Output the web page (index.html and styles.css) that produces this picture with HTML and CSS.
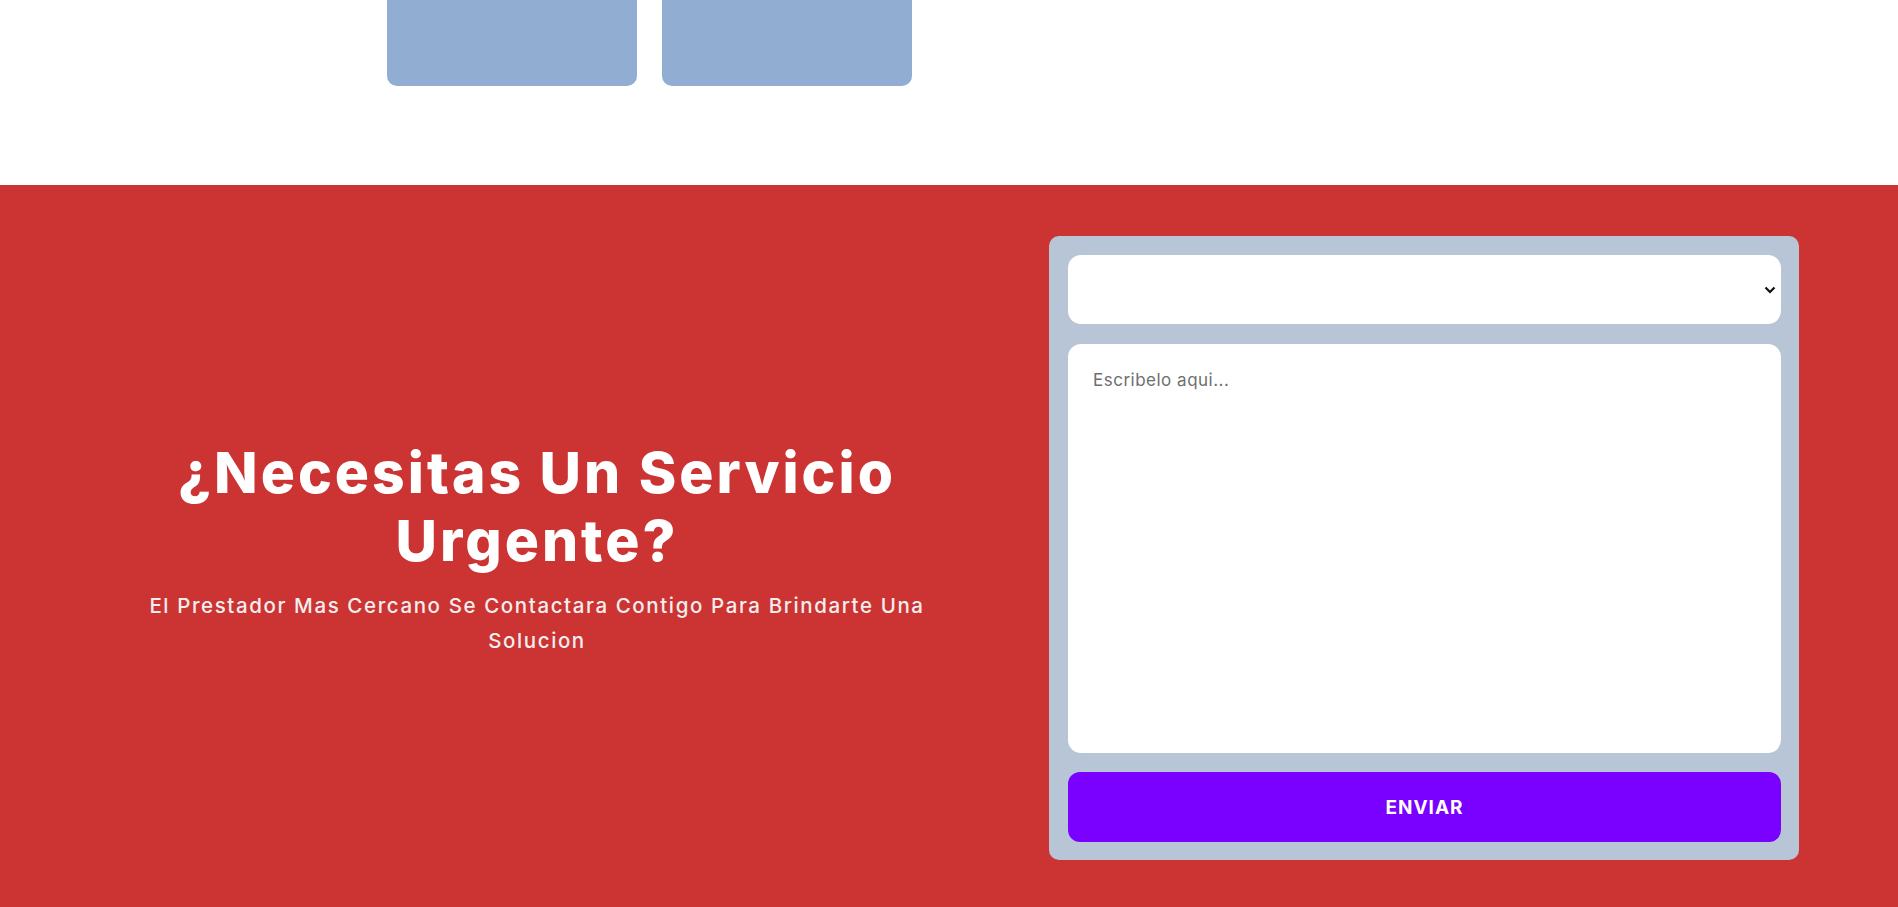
FILE: index.html
```html
<!DOCTYPE html>
<html lang="es">
<head>
<meta charset="utf-8">
<title>Servicio Urgente</title>
<link rel="stylesheet" href="styles.css">
</head>
<body>
  <section class="cards-section">
    <div class="cards-row">
      <div class="card"></div>
      <div class="card"></div>
    </div>
  </section>
  <section class="urgent">
    <div class="urgent-text">
      <h2 class="urgent-title">¿Necesitas Un Servicio<br>Urgente?</h2>
      <p class="urgent-sub">El Prestador Mas Cercano Se Contactara Contigo Para Brindarte Una Solucion</p>
    </div>
    <form class="urgent-form">
      <div class="select-wrap">
        <select class="form-select">
          <option></option>
        </select>
        <svg class="select-arrow" width="12" height="8" viewBox="0 0 12 8"><path d="M1.5 1.5 L6 6 L10.5 1.5" fill="none" stroke="#111" stroke-width="2.2"/></svg>
      </div>
      <textarea class="form-text" placeholder="Escribelo aqui..."></textarea>
      <button type="button" class="form-btn">ENVIAR</button>
    </form>
  </section>
</body>
</html>
```
FILE: styles.css
```css
* { box-sizing: border-box; }
html, body { margin: 0; padding: 0; }
body {
  font-family: "Inter", "DejaVu Sans", sans-serif;
  background: #ffffff;
  overflow: hidden;
}
.cards-section {
  background: #ffffff;
  padding: 0 0 99px 387px;
}
.cards-row {
  display: flex;
  gap: 25px;
}
.card {
  width: 250px;
  height: 86px;
  background: #91add1;
  border-radius: 0 0 10px 10px;
}
.urgent {
  background: #cc3333;
  display: flex;
  align-items: center;
  padding: 51px 99px 51px 137px;
  gap: 112px;
}
.urgent-text {
  flex: 0 0 800px;
  text-align: center;
  color: #ffffff;
}
.urgent-title {
  margin: 0;
  font-family: "Inter", sans-serif;
  font-weight: 800;
  font-size: 57px;
  line-height: 68px;
  letter-spacing: 3px;
}
.urgent-sub {
  margin: 13px auto 0;
  max-width: 800px;
  font-family: "Inter", sans-serif;
  font-weight: 500;
  font-size: 20.5px;
  line-height: 35px;
  letter-spacing: 1.6px;
  color: #f3eeee;
}
.urgent-form {
  flex: 0 0 750px;
  background: #b8c5d6;
  border-radius: 10px;
  padding: 19px 18px 18px 19px;
  display: flex;
  flex-direction: column;
}
.select-wrap {
  position: relative;
  height: 69px;
}
.form-select {
  appearance: none;
  -webkit-appearance: none;
  width: 100%;
  height: 69px;
  border: none;
  border-radius: 13px;
  background: #ffffff;
  font-family: "Inter", sans-serif;
  font-size: 16px;
  padding: 0 24px;
  outline: none;
}
.select-arrow {
  position: absolute;
  right: 5px;
  top: 31px;
}
.form-text {
  margin-top: 20px;
  height: 409px;
  border: none;
  border-radius: 13px;
  background: #ffffff;
  padding: 24px 25px;
  font-family: "Inter", sans-serif;
  font-size: 17px;
  line-height: 24px;
  letter-spacing: 0.5px;
  resize: none;
  outline: none;
}
.form-text::placeholder {
  color: #6f6f6f;
}
.form-btn {
  margin-top: 19px;
  height: 70px;
  border: none;
  border-radius: 12px;
  background: #7a00ff;
  color: #ffffff;
  font-family: "Inter", sans-serif;
  font-weight: 700;
  font-size: 19px;
  letter-spacing: 1px;
  cursor: pointer;
}
```
